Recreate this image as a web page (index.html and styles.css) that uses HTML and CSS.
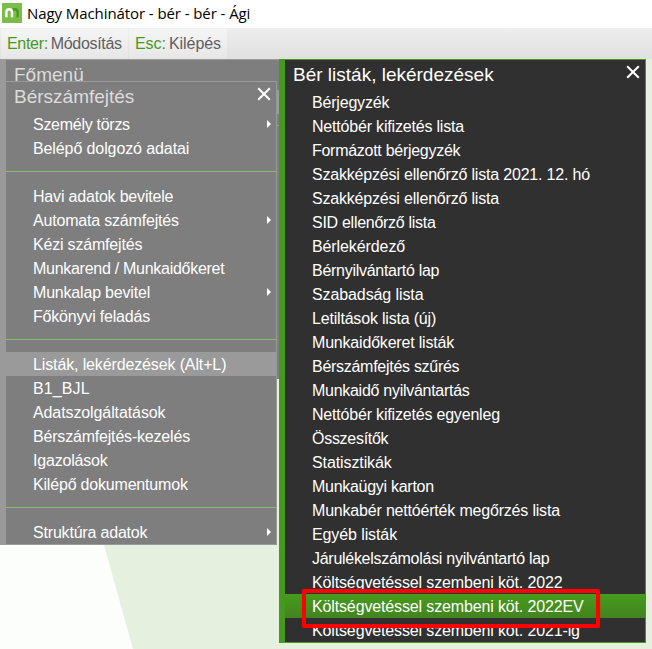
FILE: index.html
```html
<!DOCTYPE html>
<html lang="hu">
<head>
<meta charset="utf-8">
<title>Nagy Machinátor</title>
<link rel="stylesheet" href="styles.css">
</head>
<body>
<header class="titlebar">
<svg class="logo" width="20" height="20" viewBox="0 0 20 20"><rect width="20" height="20" fill="#7cbd4a"/><path d="M9.6 7.6Q10.8 6.3 12.6 6.3Q15.6 6.3 15.6 9.3V14.2" fill="none" stroke="#46991e" stroke-width="2.4"/><path d="M4.4 14.2V9.3Q4.4 6.3 7.2 6.3T10 9.3V14.2" fill="none" stroke="#fff" stroke-width="2.4"/></svg>
<span class="caption">Nagy Machinátor - bér - bér - Ági</span>
</header>
<nav class="toolbar">
<div class="command enter"><b>Enter:</b><span>Módosítás</span></div>
<div class="command esc"><b>Esc:</b><span>Kilépés</span></div>
</nav>
<main class="workspace">
<svg class="backdrop" width="652" height="590" viewBox="0 0 652 590"><path d="M0 0H-1V590H133L104 486L80 400H0Z" fill="#fbfefb"/></svg>
<section class="main-menu"><h2>Főmenü</h2><div class="track"></div><div class="rule"></div></section>
<section class="menu payroll">
<h2>Bérszámfejtés</h2>
<svg class="close" width="14" height="14" viewBox="0 0 14 14"><path d="M1.2 1.2L12.8 12.8M12.8 1.2L1.2 12.8"/></svg>
<ul>
<li class="sub tight"><span>Személy törzs</span></li>
<li class="loose"><span>Belépő dolgozó adatai</span></li>
<li class="separator"></li>
<li><span>Havi adatok bevitele</span></li>
<li class="sub"><span>Automata számfejtés</span></li>
<li><span>Kézi számfejtés</span></li>
<li class="tight"><span>Munkarend / Munkaidőkeret</span></li>
<li class="sub"><span>Munkalap bevitel</span></li>
<li><span>Főkönyvi feladás</span></li>
<li class="separator"></li>
<li class="selected"><span>Listák, lekérdezések (Alt+L)</span></li>
<li class="wide"><span>B1_BJL</span></li>
<li class="loose"><span>Adatszolgáltatások</span></li>
<li><span>Bérszámfejtés-kezelés</span></li>
<li><span>Igazolások</span></li>
<li><span>Kilépő dokumentumok</span></li>
<li class="separator"></li>
<li class="sub"><span>Struktúra adatok</span></li>
</ul>
</section>
<section class="menu lists">
<h2>Bér listák, lekérdezések</h2>
<svg class="close" width="14" height="14" viewBox="0 0 14 14"><path d="M1.2 1.2L12.8 12.8M12.8 1.2L1.2 12.8"/></svg>
<ul>
<li><span>Bérjegyzék</span></li>
<li><span>Nettóbér kifizetés lista</span></li>
<li class="tight"><span>Formázott bérjegyzék</span></li>
<li><span>Szakképzési ellenőrző lista 2021. 12. hó</span></li>
<li><span>Szakképzési ellenőrző lista</span></li>
<li class="tight"><span>SID ellenőrző lista</span></li>
<li class="loose"><span>Bérlekérdező</span></li>
<li class="tight"><span>Bérnyilvántartó lap</span></li>
<li class="loose"><span>Szabadság lista</span></li>
<li><span>Letiltások lista (új)</span></li>
<li><span>Munkaidőkeret listák</span></li>
<li class="tight"><span>Bérszámfejtés szűrés</span></li>
<li class="tight"><span>Munkaidő nyilvántartás</span></li>
<li><span>Nettóbér kifizetés egyenleg</span></li>
<li class="tight"><span>Összesítők</span></li>
<li class="loose"><span>Statisztikák</span></li>
<li class="tight"><span>Munkaügyi karton</span></li>
<li><span>Munkabér nettóérték megőrzés lista</span></li>
<li class="loose"><span>Egyéb listák</span></li>
<li class="tight"><span>Járulékelszámolási nyilvántartó lap</span></li>
<li class="even"><span>Költségvetéssel szembeni köt. 2022</span></li>
<li class="selected even"><span>Költségvetéssel szembeni köt. 2022EV</span><div class="marker"></div></li>
<li class="even"><span>Költségvetéssel szembeni köt. 2021-ig</span></li>
</ul>
</section>
</main>
</body>
</html>
```
FILE: styles.css
```css
* { box-sizing: border-box; }
body { margin: 0; width: 652px; height: 649px; overflow: hidden; background: #e5f0df; font: 16px/24px "Liberation Sans", Arial, sans-serif; }
.titlebar { display: flex; align-items: center; gap: 5px; height: 28px; padding: 0 2px 2px; background: #fff; color: #000; }
.caption { font: 15px/24px "Open Sans", sans-serif; letter-spacing: -0.08px; white-space: nowrap; }
.toolbar { display: flex; gap: 1px; height: 31px; padding: 1px; background: linear-gradient(#eee, #e0e0e0); color: #606060; }
.command { display: flex; gap: 3px; height: 30px; padding: 0 6px; line-height: 29px; background: linear-gradient(#f5f5f5, #e6e6e6); letter-spacing: -0.32px; white-space: nowrap; }
.command b { font-weight: normal; color: #46991e; }
.enter { width: 127px; }
.esc { width: 98px; letter-spacing: -0.05px; }
.workspace { position: relative; display: grid; grid-template-columns: 279px 367px 6px; height: 590px; }
.backdrop { position: absolute; left: 0; top: 0; }
.main-menu { position: relative; grid-area: 1 / 1; height: 320px; border-left: 6px solid #9a9a9a; border-top: 1px solid #9a9a9a; background: #7e7e7e; color: #dcdcdc; }
.track { position: absolute; right: 0; top: 30px; width: 3px; height: 24px; background: #9a9a9a; }
.rule { position: absolute; right: 0; top: 65px; width: 3px; height: 1px; background: #82b366; }
h2 { margin: 0; padding-left: 8px; font-size: 19px; line-height: 30px; font-weight: normal; white-space: nowrap; }
ul { list-style: none; margin: 0; padding: 0; }
.menu { position: relative; color: #fff; }
.menu li { position: relative; height: 24px; padding-left: 27px; line-height: 26px; letter-spacing: -0.19px; white-space: nowrap; }
.menu .tight { letter-spacing: -0.28px; }
.menu .loose { letter-spacing: -0.1px; }
.menu .even { letter-spacing: -0.14px; }
.menu .wide { letter-spacing: 0.1px; }
.payroll { grid-area: 1 / 1; width: 277px; height: 464px; margin-top: 22px; background: #7e7e7e; border: 1px solid #9a9a9a; border-left-width: 6px; }
.payroll h2 { color: #dcdcdc; }
.payroll .selected { background: #9a9a9a; letter-spacing: -0.13px; }
.menu .separator { padding: 11px 0 0; }
.separator::before { content: ""; display: block; height: 1px; background: #8bb874; }
.sub::after { content: ""; position: absolute; right: 5px; top: 8px; border: solid transparent; border-width: 4px 0 4px 4px; border-left-color: #fff; }
.lists { grid-area: 1 / 2; height: 584px; background: #303030; border: 1px solid #46991e; border-left-width: 6px; }
.lists .selected { background: linear-gradient(#469c1c, #438321); z-index: 1; }
.close { position: absolute; right: 5px; top: 5px; fill: none; stroke: #fff; stroke-width: 2; }
.marker { position: absolute; left: 17px; top: -5px; width: 298px; height: 39px; border: 4px solid #f00; border-radius: 2px; box-shadow: 0 0 1px #f00; }
```
